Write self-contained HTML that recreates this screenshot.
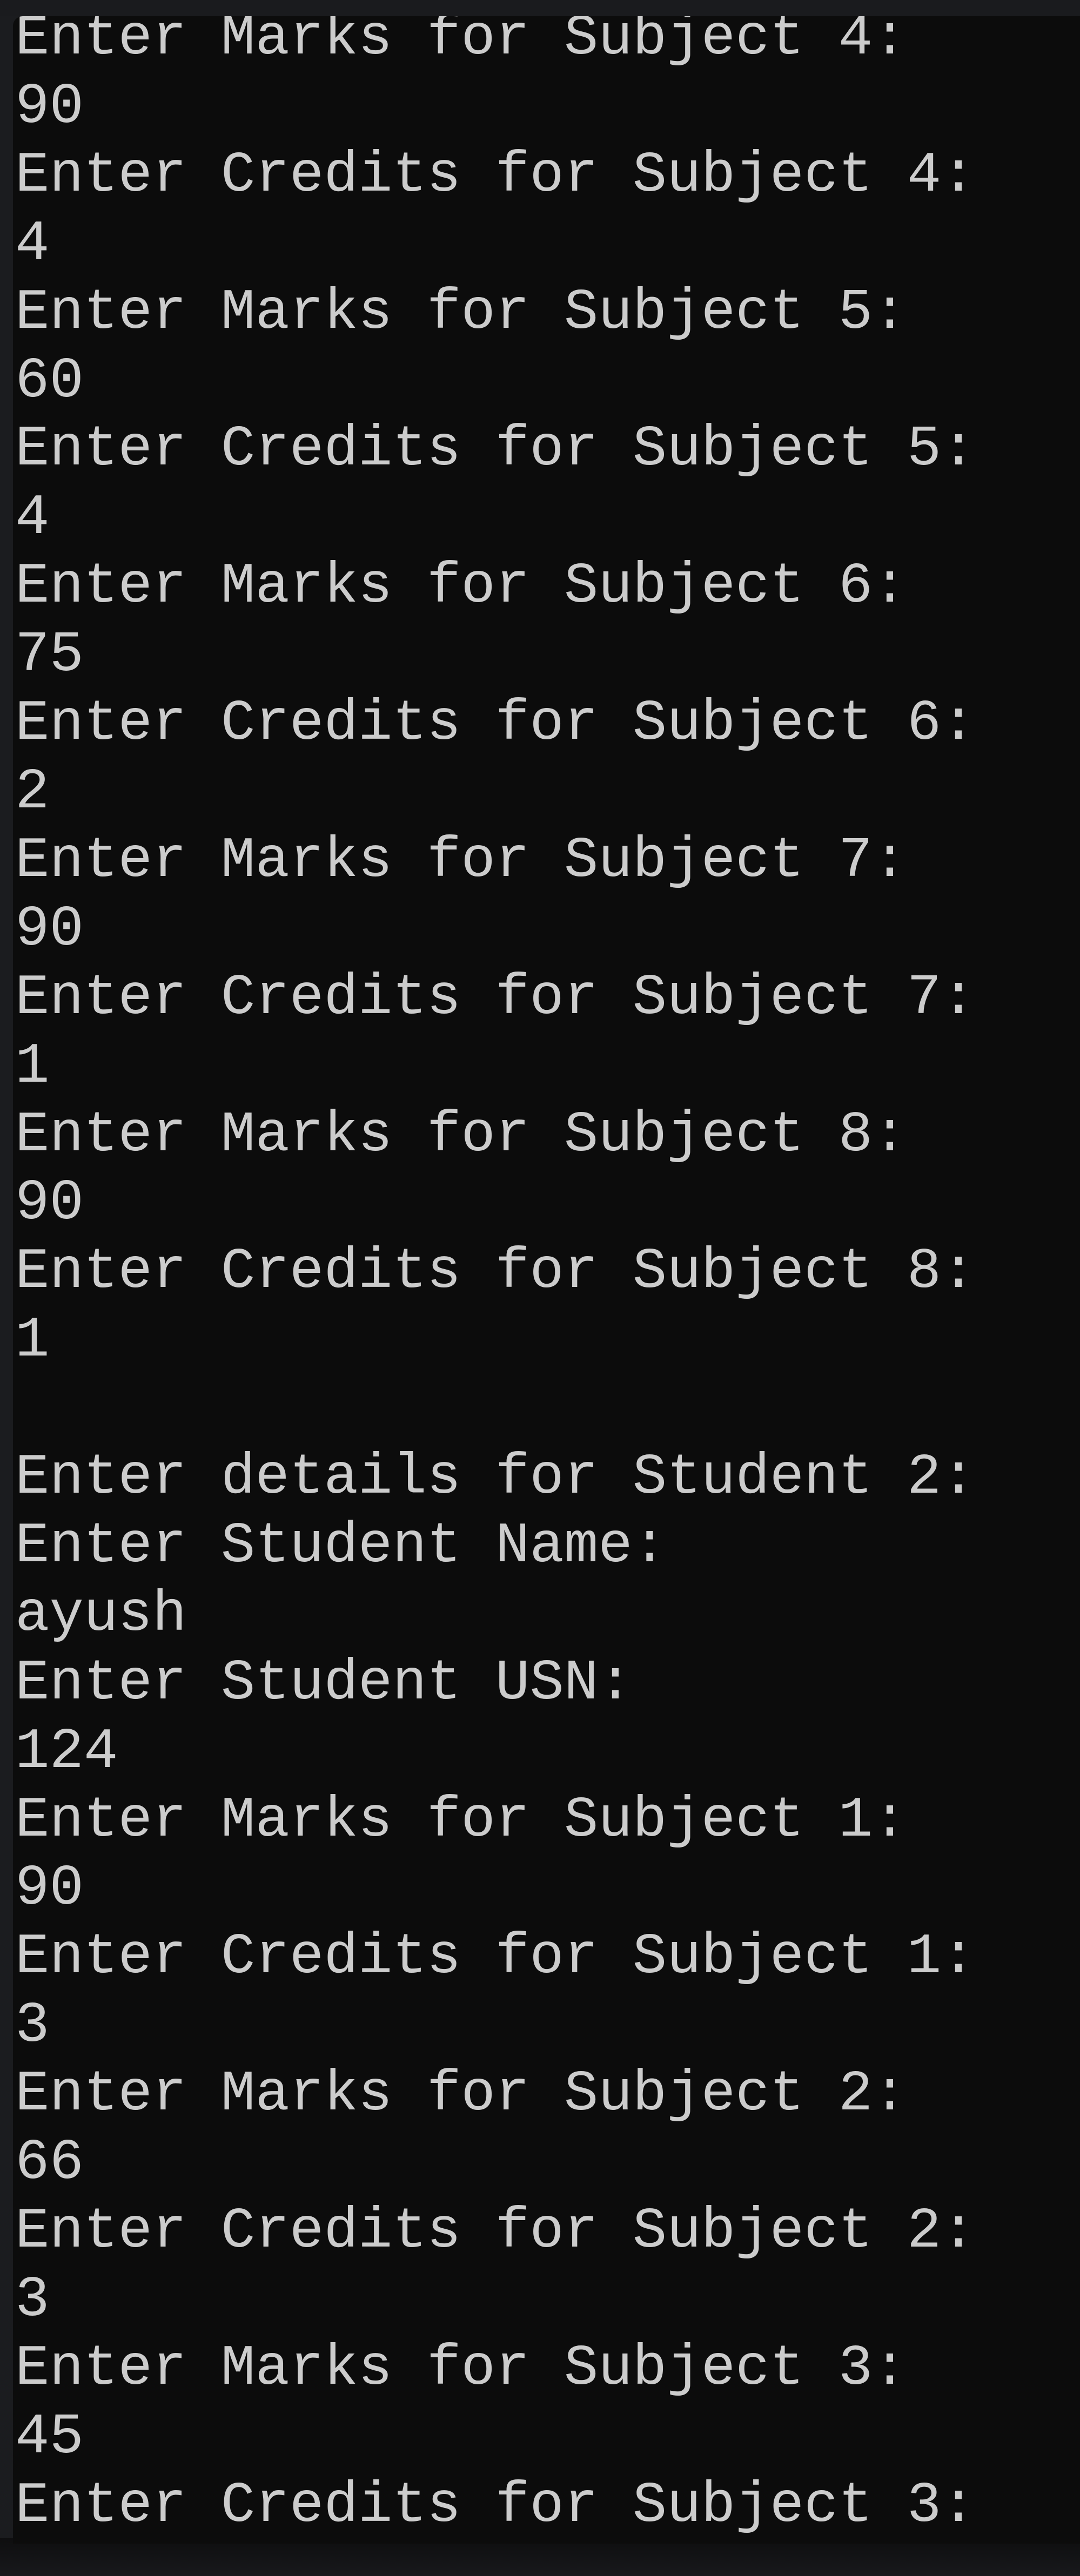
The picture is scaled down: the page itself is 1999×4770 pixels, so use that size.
<!DOCTYPE html>
<html><head><meta charset="utf-8"><style>
html,body{margin:0;padding:0;}
body{width:1999px;height:4770px;background:#1b1c1f;position:relative;overflow:hidden;}
.top{position:absolute;left:0;top:0;width:1999px;height:30px;background:#1a1b1e;}
.win{position:absolute;left:24px;top:30px;width:1975px;height:4680px;background:#0c0c0c;overflow:hidden;border-top-left-radius:18px;}
.bot{position:absolute;left:0;top:4700px;width:1999px;height:70px;background:linear-gradient(#0e0e0f,#18191c);}
pre{position:absolute;left:4px;top:-22px;margin:0;font-family:"Liberation Mono",monospace;font-size:105.8px;line-height:126.9px;color:#cccccc;}
</style></head><body>
<div class="top"></div>
<div class="bot"></div>
<div class="win"><pre>Enter Marks for Subject 4:
90
Enter Credits for Subject 4:
4
Enter Marks for Subject 5:
60
Enter Credits for Subject 5:
4
Enter Marks for Subject 6:
75
Enter Credits for Subject 6:
2
Enter Marks for Subject 7:
90
Enter Credits for Subject 7:
1
Enter Marks for Subject 8:
90
Enter Credits for Subject 8:
1

Enter details for Student 2:
Enter Student Name:
ayush
Enter Student USN:
124
Enter Marks for Subject 1:
90
Enter Credits for Subject 1:
3
Enter Marks for Subject 2:
66
Enter Credits for Subject 2:
3
Enter Marks for Subject 3:
45
Enter Credits for Subject 3:</pre></div>
</body></html>
